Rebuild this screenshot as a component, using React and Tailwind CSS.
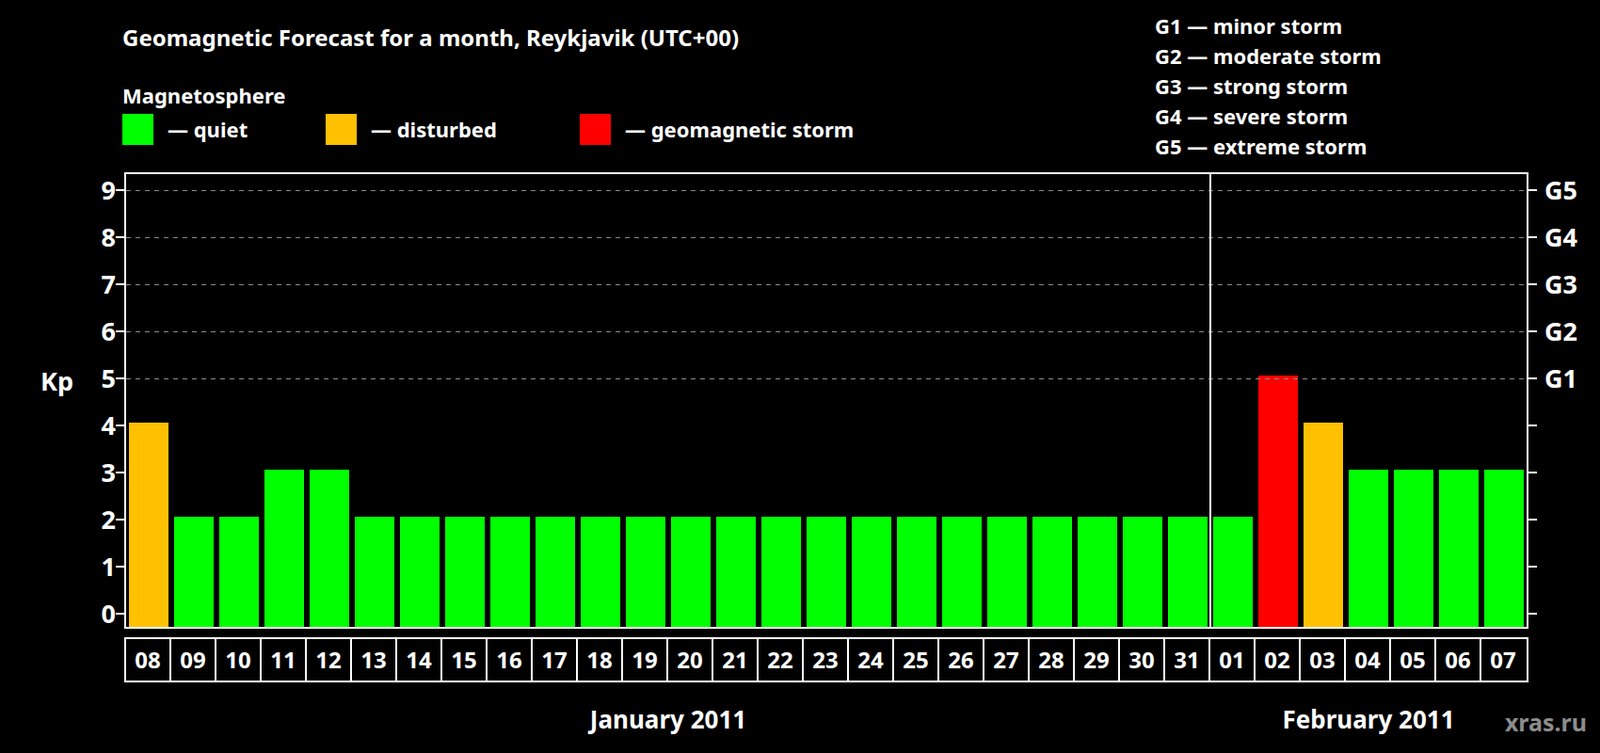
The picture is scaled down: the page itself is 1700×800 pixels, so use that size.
import React from "react";

const days = [
  ["08", 4], ["09", 2], ["10", 2], ["11", 3], ["12", 3], ["13", 2], ["14", 2], ["15", 2],
  ["16", 2], ["17", 2], ["18", 2], ["19", 2], ["20", 2], ["21", 2], ["22", 2], ["23", 2],
  ["24", 2], ["25", 2], ["26", 2], ["27", 2], ["28", 2], ["29", 2], ["30", 2], ["31", 2],
  ["01", 2], ["02", 5], ["03", 4], ["04", 3], ["05", 3], ["06", 3], ["07", 3],
];

const color = (v) => (v >= 5 ? "bg-[#ff0000]" : v === 4 ? "bg-[#ffc000]" : "bg-[#00ff00]");
const levels = [9, 8, 7, 6, 5, 4, 3, 2, 1, 0];
const storms = { 9: "G5", 8: "G4", 7: "G3", 6: "G2", 5: "G1" };

const App = () => {
  return (
    <div className="w-[1700px] h-[800px] bg-black text-white font-['Liberation_Sans',Arial,sans-serif] font-bold relative overflow-hidden">
      {/* header */}
      <div className="flex h-[183px]">
        <div className="pl-[130px] w-[1227px] flex flex-col">
          <div className="pt-[26px] text-[24px] leading-[28px]">Geomagnetic Forecast for a month, Reykjavik (UTC+00)</div>
          <div className="pt-[34px] text-[22px] leading-[26px]">Magnetosphere</div>
          <div className="flex items-center pt-[7px] text-[22px]">
            <div className="w-[33px] h-[33px] bg-[#00ff00]" />
            <span className="ml-[15px] w-[168px]">— quiet</span>
            <div className="w-[33px] h-[33px] bg-[#ffc000]" />
            <span className="ml-[15px] w-[222px]">— disturbed</span>
            <div className="w-[33px] h-[33px] bg-[#ff0000]" />
            <span className="ml-[15px]">— geomagnetic storm</span>
          </div>
        </div>
        <div className="pt-[11px] text-[22px] leading-[32px]">
          <div>G1 — minor storm</div>
          <div>G2 — moderate storm</div>
          <div>G3 — strong storm</div>
          <div>G4 — severe storm</div>
          <div>G5 — extreme storm</div>
        </div>
      </div>

      {/* chart */}
      <div className="flex">
        <div className="w-[132px] flex">
          <div className="w-[92px] pl-[43px] pt-[202px] text-[27px]">Kp</div>
          <div className="flex flex-col -mt-[6px]">
            {levels.map((l) => (
              <div key={l} className="h-[50px] flex items-center text-[27px]">
                <span className="w-[31px] text-right">{l}</span>
                <span className="ml-[0px] w-[9px] h-[2px] bg-white" />
              </div>
            ))}
          </div>
        </div>
        <div className="w-[1492px] h-[485px] border-2 border-white relative flex items-end">
          {levels.filter((l) => l >= 5).map((l) => (
            <div
              key={l}
              className="absolute left-0 right-0 h-px bg-[repeating-linear-gradient(90deg,#8a8a8a_0_5px,transparent_5px_10px)]"
              style={{ top: 467 - l * 50 }}
            />
          ))}
          <div className="absolute top-0 bottom-0 left-[1151px] w-[2px] bg-white" />
          {days.map(([d, v], i) => (
            <div key={i} className="w-[48px] px-[3px] flex items-end">
              <div className={`w-full ${color(v)}`} style={{ height: 17 + v * 50 }} />
            </div>
          ))}
        </div>
        <div className="flex flex-col -mt-[6px]">
          {levels.map((l) => (
            <div key={l} className="h-[50px] flex items-center text-[27px]">
              <span className="w-[9px] h-[2px] bg-white" />
              <span className="ml-[8px]">{storms[l] || ""}</span>
            </div>
          ))}
        </div>
      </div>

      {/* dates */}
      <div className="ml-[132px] w-[1492px] flex border-y-2 border-r-2 border-white h-[48px] mt-[0px]">
        {days.map(([d], i) => (
          <div key={i} className="w-[48px] border-l-2 border-white flex items-center justify-center text-[24px]">
            {d}
          </div>
        ))}
      </div>

      <div className="ml-[134px] flex text-[26px] pt-[20px]">
        <div className="w-[1152px] text-center">January 2011</div>
        <div className="w-[336px] text-center">February 2011</div>
      </div>

      <div className="absolute right-[14px] bottom-[14px] text-[25px] text-[#8c8c8c]">xras.ru</div>
    </div>
  );
};

export default App;
